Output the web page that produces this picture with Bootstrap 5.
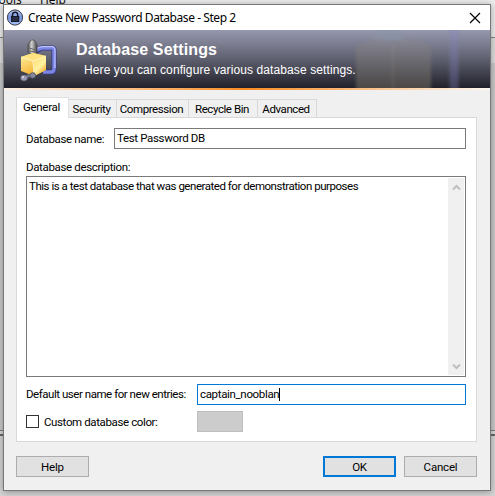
<!DOCTYPE html>
<html lang="en">
<head>
<meta charset="utf-8">
<meta name="viewport" content="width=device-width, initial-scale=1">
<title>Create New Password Database - Step 2</title>
<link href="https://cdn.jsdelivr.net/npm/bootstrap@5.3.0/dist/css/bootstrap.min.css" rel="stylesheet">
<style>
body{width:495px;height:496px;background:#d5d5d5;font:11.5px/14px Roboto,"Liberation Sans",sans-serif;color:#000;letter-spacing:-.34px}
.backdrop{inset:0}
.bg-menu{height:37px;background:#ececec;font:12px/14px "Open Sans",sans-serif;letter-spacing:0}
.bg-menu span{margin-top:-7px;height:14px}
.bg-menu .m-tools{margin-left:-8px;width:48px}
.bg-main{height:393px;border-top:1px solid #838383;background:linear-gradient(#dedede 25px,#cacaca 25px)}
.bg-split{height:6px;border-top:1px solid #777e86;border-bottom:2px solid #686868;background:#d8d8d8}
.dialog{left:3px;top:4px;width:488px;height:487px;border:1px solid #777;background:#f0f0f0;box-shadow:0 1px 7px rgba(0,0,0,.35)}
.titlebar{height:25px;background:#fff;font:12px/24px "Noto Sans","Open Sans",sans-serif;padding-left:2px;padding-right:9px}
.titlebar .caption{margin-left:3px;letter-spacing:-.44px}
.banner{height:58px;background:linear-gradient(#9698ae,#5f606f 50%,#21212b);color:#fff;font-family:"Liberation Sans",Arial,sans-serif}
.banner .logo{margin:8px 0 0 14px}
.banner .heading{margin-left:14px}
.banner h1{font-size:16px;line-height:18px;font-weight:700;letter-spacing:.14px;margin:11px 0 0}
.banner p{font-size:12px;line-height:14px;margin:4px 0 0 8px;letter-spacing:.1px}
.ghost{right:0;top:0}
.stripe{height:2px;background:linear-gradient(90deg,#fff3e6,#f98b22 50%,#fff8f0)}
.content-area{padding:7px 12px 0}
.nav-tabs.sheet-tabs{height:20px;border:0;flex-wrap:nowrap;align-items:flex-end}
.sheet-tabs .nav-link{height:18px;padding:0 2px 0 0;border:1px solid #d9d9d9;border-left:0;border-bottom:0;border-radius:0;color:#000;background:#f0f0f0;margin:0;line-height:18px;text-align:center;letter-spacing:-.42px}
.sheet-tabs .nav-link.active{width:53px;height:21px;margin-bottom:-1px;border-left:1px solid #d9d9d9;background:#fff;color:#000;position:relative;z-index:1;line-height:19px;letter-spacing:-.3px}
.t-security{width:48px}.t-compression{width:72px}.t-recycle{width:69px}.t-advanced{width:59px}
.sheet{width:461px;height:325px;background:#fff;border:1px solid #d9d9d9;padding:10px 10px 0 9px}
.box.form-control{height:21px;border:1px solid #7a7a7a;border-radius:0;padding:0 2px;font-size:11.5px;line-height:18px;letter-spacing:-.34px;color:#000;background:#fff;box-shadow:none}
.box.focused{border-color:#0078d7}
.lab{white-space:nowrap}
.name-lab{width:88px}.user-lab{width:171px}
.user-row .user-lab{letter-spacing:-.46px;margin-top:-2px}
.memo-lab{height:27px;padding-top:11px}
.memo{height:201px;border:1px solid #7a7a7a;background:#fff;padding:1px}
.memo .words{padding:1px 0 0 1px;letter-spacing:-.47px}
.scroller{width:16px;background:#f0f0f0;padding:6px 0 5px}
.caret-bar{width:1px;height:13px;background:#000;display:inline-block;vertical-align:-3px}
.user-row{margin-top:7px}.color-row{margin-top:6px}
.check{width:13px;height:13px;border:1px solid #333}
.check-text{margin-left:5px;letter-spacing:-.38px}
.swatch{width:46px;height:21px;background:#ccc;border:1px solid #bfbfbf}
.actions{margin-top:14px;width:461px;gap:8px}
.push.btn{width:73px;height:21px;padding:0;border:1px solid #adadad;border-radius:0;background:#e1e1e1;color:#000;font-size:11.5px;line-height:20px;letter-spacing:-.2px}
.push.primary{border:2px solid #0078d7;line-height:18px}
</style>
<script src="https://cdn.jsdelivr.net/npm/bootstrap@5.3.0/dist/js/bootstrap.bundle.min.js"></script>
</head>
<body class="position-relative overflow-hidden">
<div class="backdrop position-absolute" aria-hidden="true">
  <div class="bg-menu d-flex overflow-hidden"><span class="m-tools">Tools</span><span>Help</span></div>
  <div class="bg-main"></div><div class="bg-split"></div>
</div>
<main class="dialog position-absolute">
  <header class="titlebar d-flex align-items-center">
    <svg width="19" height="19" viewBox="0 0 19 19"><defs><linearGradient id="lk" x2="0" y2="1"><stop stop-color="#b9cbef"/><stop offset=".5" stop-color="#7895df"/><stop offset="1" stop-color="#aac5ff"/></linearGradient></defs><circle cx="9" cy="9.5" r="7.6" fill="url(#lk)" stroke="#30343f"/><path d="M6.5 8V6.8a2.6 2.6 0 0 1 5.2 0V8" fill="none" stroke="#171b29" stroke-width="1.5"/><rect x="5" y="8" width="8.3" height="6" fill="#171b29"/><path d="M6 10h6M6 12h6" stroke="#48557a" stroke-width=".7"/></svg>
    <span class="caption">Create New Password Database - Step 2</span>
    <svg class="ms-auto" width="12" height="12" viewBox="0 0 12 12"><path d="M1 1l10 10M11 1L1 11" stroke="#000" stroke-width="1.15"/></svg>
  </header>
  <section class="banner position-relative d-flex overflow-hidden">
    <svg class="ghost position-absolute" width="140" height="58" viewBox="0 0 140 58"><defs><filter id="soft"><feGaussianBlur stdDeviation="1.5"/></filter><linearGradient id="gx" x2="0" y2="1"><stop stop-color="#8f8b8c" stop-opacity=".3"/><stop offset="1" stop-color="#77705f" stop-opacity=".5"/></linearGradient></defs><g filter="url(#soft)"><path d="M27-5h22l4 15H23z" fill="#8b93a8" opacity=".5"/><path d="M6 16L27 7l14 5 16-5 24 8v50H6z" fill="url(#gx)"/><path d="M43 14v48" stroke="#a79994" stroke-width="1.3" opacity=".25"/><path d="M104-6V64" fill="none" stroke="#8283c0" stroke-width="9" opacity=".32"/></g></svg>
    <svg class="logo flex-shrink-0" width="44" height="46" viewBox="0 0 44 46"><defs><linearGradient id="gold" x2=".5" y2="1"><stop stop-color="#fff5ad"/><stop offset="1" stop-color="#f6ac25"/></linearGradient><linearGradient id="gold2" x2=".7" y2="1"><stop stop-color="#ffd762"/><stop offset=".6" stop-color="#fff2a2"/><stop offset="1" stop-color="#f5a929"/></linearGradient><linearGradient id="metal"><stop stop-color="#575757"/><stop offset=".4" stop-color="#d1d1d1"/><stop offset="1" stop-color="#444"/></linearGradient></defs>
      <path d="M18 13L24 10H34q2 0 2 2V31q0 3-3 3H25" fill="none" stroke="#303784" stroke-width="5"/><path d="M18 12L24 10H34q2 0 2 2V31q0 3-3 3H25" fill="none" stroke="#7b84e1" stroke-width="3.5"/><path d="M18 10.5L24 8.7H34q3 0 3 3V30" fill="none" stroke="#bbc1ff" stroke-width="1.2"/>
      <path d="M10 15V7l2-4q2.5-2.5 5 0l2 4v9z" fill="url(#metal)" stroke="#464646" stroke-width=".7"/><path d="M11 10l7 2M11 13l7 1" stroke="#676767"/>
      <path d="M3 19l12-4 13 3v14l-12 6L3 33z" fill="url(#gold)"/><path d="M15 23l13-5v14l-12 6z" fill="url(#gold2)"/><path d="M3 19l12-4 13 3-13 5z" fill="#ffe380"/><path d="M3 19l12 4 13-5M15 23l1 15" fill="none" stroke="#fff8c9" stroke-width=".8"/>
      <path d="M7 39l10-3" stroke="#777b89" stroke-width="3"/><ellipse cx="6" cy="40" rx="3.5" ry="3" fill="#9899b0" stroke="#505260" stroke-width=".6"/><ellipse cx="14.7" cy="37.5" rx="3" ry="2.8" fill="#85889b" stroke="#424455" stroke-width=".7"/><circle cx="5" cy="39" r="1.2" fill="#cacbdd"/></svg>
    <div class="heading position-relative"><h1>Database Settings</h1><p>Here you can configure various database settings.</p></div>
  </section>
  <div class="stripe"></div>
  <div class="content-area">
    <nav class="nav nav-tabs sheet-tabs"><a class="nav-link active">General</a><a class="nav-link t-security">Security</a><a class="nav-link t-compression">Compression</a><a class="nav-link t-recycle">Recycle Bin</a><a class="nav-link t-advanced">Advanced</a></nav>
    <section class="sheet">
      <div class="d-flex align-items-center"><label class="lab name-lab flex-shrink-0">Database name:</label><div class="box form-control">Test Password DB</div></div>
      <div class="lab memo-lab">Database description:</div>
      <div class="memo d-flex justify-content-between"><div class="words text-nowrap">This is a test database that was generated for demonstration purposes</div><div class="scroller d-flex flex-column justify-content-between align-items-center"><svg width="9" height="7"><path d="M1 5.5L4.5 2 8 5.5" fill="none" stroke="#bfbfbf" stroke-width="2"/></svg><svg width="9" height="7"><path d="M1 1.5L4.5 5 8 1.5" fill="none" stroke="#bfbfbf" stroke-width="2"/></svg></div></div>
      <div class="d-flex align-items-center user-row"><label class="lab user-lab flex-shrink-0">Default user name for new entries:</label><div class="box form-control focused">captain_nooblan<span class="caret-bar"></span></div></div>
      <div class="d-flex align-items-center color-row"><div class="user-lab d-flex align-items-center"><span class="check"></span><span class="check-text">Custom database color:</span></div><span class="swatch"></span></div>
    </section>
    <footer class="actions d-flex"><button class="btn push me-auto">Help</button><button class="btn push primary">OK</button><button class="btn push">Cancel</button></footer>
  </div>
</main>
</body>
</html>
